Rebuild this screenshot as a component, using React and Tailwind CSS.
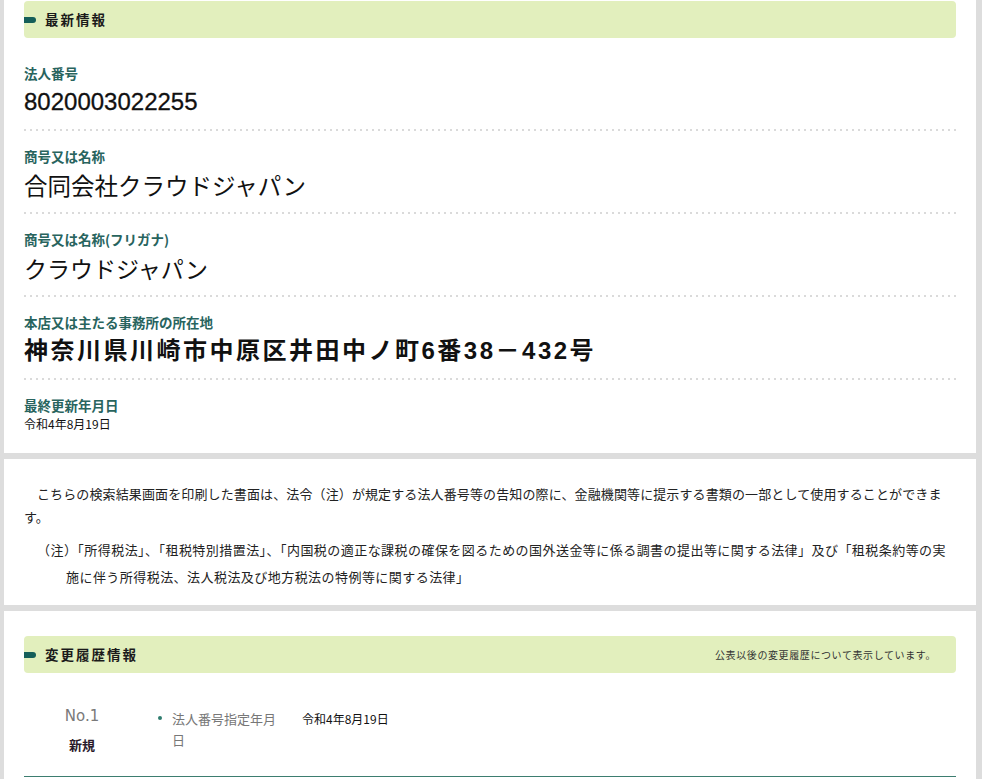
import React from "react";

const JP = { fontFamily: '"Noto Sans CJK JP", "Noto Sans", sans-serif' };
const NUM = { fontFamily: '"Liberation Sans", "Noto Sans CJK JP", sans-serif' };

function Header({ title, right }) {
  return (
    <div className="flex h-[37px] items-center rounded-[4px] bg-[#e2efbd]">
      <span className="ml-0 h-[6px] w-[12px] rounded-l-[1px] rounded-r-full bg-[#155f59]" />
      <span className="ml-[9px] text-[13.5px] font-bold leading-none tracking-[2px] text-[#1a1a1a]">
        {title}
      </span>
      {right && (
        <span className="ml-auto mr-[20px] text-[10px] leading-none tracking-[0.6px] text-[#333]">
          {right}
        </span>
      )}
    </div>
  );
}

function Sep() {
  return (
    <div className="h-[2px] w-full bg-[linear-gradient(to_right,#dadada_2px,transparent_2px)] bg-[length:6px_2px]" />
  );
}

function Field({ label, children, first, last }) {
  return (
    <div className={first ? "mt-[26px]" : "pt-[16px]"}>
      <div className="h-[18px] text-[13.5px] font-bold leading-[18px] text-[#28645e]">{label}</div>
      {children}
      {!last && <div className="h-[7px]" />}
      {!last && <Sep />}
    </div>
  );
}

export default function App() {
  return (
    <div className="min-h-[779px] bg-[#dddddd] pl-[4px] pr-[6px]" style={JP}>
      {/* Panel 1 */}
      <section className="bg-white px-5 pt-px pb-[19px]">
        <Header title="最新情報" />
        <Field label="法人番号" first>
          <div className="h-[40px] text-[24px] leading-[40px] text-[#111] [-webkit-text-stroke:0.3px_#111]" style={NUM}>
            8020003022255
          </div>
        </Field>
        <Field label="商号又は名称">
          <div className="h-[40px] text-[23.5px] leading-[40px] text-[#111]">合同会社クラウドジャパン</div>
        </Field>
        <Field label="商号又は名称(フリガナ)">
          <div className="h-[40px] text-[23px] leading-[40px] text-[#111]">クラウドジャパン</div>
        </Field>
        <Field label="本店又は主たる事務所の所在地">
          <div
            className="h-[40px] whitespace-nowrap text-[24px] font-semibold leading-[40px] tracking-[2.5px] text-[#111]"
            style={NUM}
          >
            神奈川県川崎市中原区井田中ノ町6番38－432号
          </div>
        </Field>
        <Field label="最終更新年月日" last>
          <div className="h-[20px] text-[12px] leading-[20px] text-[#111]">令和4年8月19日</div>
        </Field>
      </section>

      {/* Panel 2 */}
      <section className="mt-[6px] bg-white px-5 pt-[23px] pb-[15px] text-[#222]">
        <p className="whitespace-nowrap pl-[13px] text-[13px] leading-[23px] tracking-[0.12px]">
          こちらの検索結果画面を印刷した書面は、法令（注）が規定する法人番号等の告知の際に、金融機関等に提示する書類の一部として使用することができま
          <br />
          <span className="-ml-[13px]">す。</span>
        </p>
        <p className="mt-[8px] whitespace-nowrap pl-[42px] -indent-[29px] text-[13px] leading-[27px] tracking-[0.45px]">
          （注）「所得税法」、「租税特別措置法」、「内国税の適正な課税の確保を図るための国外送金等に係る調書の提出等に関する法律」及び「租税条約等の実
          <br />
          施に伴う所得税法、法人税法及び地方税法の特例等に関する法律」
        </p>
      </section>

      {/* Panel 3 */}
      <section className="mt-[6px] bg-white px-5 pt-[25px] pb-[20px]">
        <Header title="変更履歴情報" right="公表以後の変更履歴について表示しています。" />
        <div className="flex pt-[33px] pb-[21px]">
          <div className="flex w-[116px] flex-col items-center">
            <div
              className="h-[20px] text-[15px] leading-[20px] text-[#7a7a7a]"
              style={{ fontFamily: '"DejaVu Sans", sans-serif' }}
            >
              No.1
            </div>
            <div className="mt-[9px] h-[20px] text-[13px] font-bold leading-[20px] text-[#2a1a2a]">新規</div>
          </div>
          <div className="mt-[2px] flex">
            <span className="ml-[18px] mt-[8px] h-[4px] w-[4px] rounded-full bg-[#2f7c6e]" />
            <div className="ml-[10px] w-[110px] text-[13px] leading-[21px] text-[#777]">法人番号指定年月日</div>
            <div className="ml-[20px] text-[12px] leading-[21px] text-[#111]">令和4年8月19日</div>
          </div>
        </div>
        <div className="h-px bg-[#3d7d70]" />
      </section>
    </div>
  );
}
